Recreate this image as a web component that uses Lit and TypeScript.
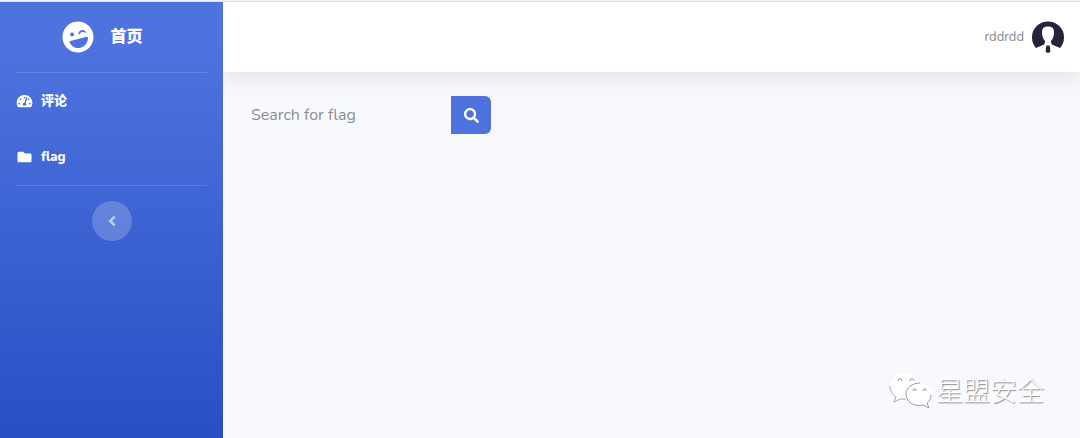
import { LitElement, html, css, svg } from "lit";
import { customElement, state } from "lit/decorators.js";

const icon = (viewBox: string, path: string, cls: string) => html`
  <svg class="icon ${cls}" viewBox=${viewBox} aria-hidden="true">${svg`<path d=${path}></path>`}</svg>
`;

const WINK =
  "M248 8C111 8 0 119 0 256s111 248 248 248 248-111 248-248S385 8 248 8zm20.1 198c4-25.2 34.2-42.1 59.9-42.1s55.9 16.9 59.9 42.1c1.7 11.1-11.4 18.3-19.8 10.8l-9.5-8.5c-14.8-13.2-46.2-13.2-61 0L288 217c-8.4 7.4-21.6.3-19.9-11zM168 160c17.7 0 32 14.3 32 32s-14.3 32-32 32-32-14.3-32-32 14.3-32 32-32zm230.9 146C391 369.4 319.2 432 256 432h-16c-73.4 0-134-55-142.9-126-1.2-9.5 6.3-18 15.9-18h270c9.6 0 17.1 8.4 15.9 18z";
const GAUGE =
  "M288 32C128.94 32 0 160.94 0 320c0 52.8 14.25 102.26 39.06 144.8 5.61 9.62 16.3 15.2 27.44 15.2h443c11.14 0 21.83-5.58 27.44-15.2C561.75 422.26 576 372.8 576 320c0-159.06-128.94-288-288-288zm0 64c14.71 0 26.58 10.13 30.32 23.65-1.11 2.26-2.64 4.23-3.45 6.67l-9.22 27.67c-5.13 3.49-10.97 6.01-17.64 6.01-17.67 0-32-14.33-32-32S270.33 96 288 96zM96 384c-17.67 0-32-14.33-32-32s14.33-32 32-32 32 14.33 32 32-14.33 32-32 32zm48-160c-17.67 0-32-14.33-32-32s14.33-32 32-32 32 14.33 32 32-14.33 32-32 32zm246.77-72.41l-61.33 184C343.13 347.33 352 364.54 352 384c0 11.72-3.38 22.55-8.88 32H232.88c-5.5-9.45-8.88-20.28-8.88-32 0-33.94 26.5-61.43 59.9-63.59l61.34-184.01c4.17-12.56 17.73-19.45 30.36-15.17 12.57 4.19 19.35 17.79 15.17 30.36zm14.66 57.2l15.52-46.55c3.47-1.29 7.13-2.23 11.05-2.23 17.67 0 32 14.33 32 32s-14.33 32-32 32c-11.38-.01-20.89-6.28-26.57-15.22zM480 384c-17.67 0-32-14.33-32-32s14.33-32 32-32 32 14.33 32 32-14.33 32-32 32z";
const FOLDER =
  "M464 128H272l-64-64H48C21.49 64 0 85.49 0 112v288c0 26.51 21.49 48 48 48h416c26.51 0 48-21.49 48-48V176c0-26.51-21.49-48-48-48z";
const SEARCH =
  "M505 442.7L405.3 343c-4.5-4.5-10.6-7-17-7H372c27.6-35.3 44-79.7 44-128C416 93.1 322.9 0 208 0S0 93.1 0 208s93.1 208 208 208c48.3 0 92.7-16.4 128-44v16.3c0 6.4 2.5 12.5 7 17l99.7 99.7c9.4 9.4 24.6 9.4 33.9 0l28.3-28.3c9.4-9.4 9.4-24.6.1-34zM208 336c-70.7 0-128-57.2-128-128 0-70.7 57.2-128 128-128 70.7 0 128 57.2 128 128 0 70.7-57.2 128-128 128z";
const ANGLE_LEFT =
  "M31.7 239l136-136c9.4-9.4 24.6-9.4 33.9 0l22.6 22.6c9.4 9.4 9.4 24.6 0 33.9L127.9 256l96.4 96.4c9.4 9.4 9.4 24.6 0 33.9L201.7 409c-9.4 9.4-24.6 9.4-33.9 0l-136-136c-9.5-9.4-9.5-24.6-.1-34z";

@customElement("app-root")
export class AppRoot extends LitElement {
  @state() private query = "";

  static styles = css`
    :host {
      display: flex;
      box-sizing: border-box;
      min-height: 100vh;
      padding-top: 2px;
      position: relative;
      background: linear-gradient(#f6f5f6 0 1px, #e2e1e3 1px 2px, #f8f9fd 2px);
      font-family: Nunito, Lato, "Noto Sans CJK SC", sans-serif;
      font-size: 16px;
      line-height: 24px;
      color: #858796;
    }
    *, *::before, *::after { box-sizing: border-box; }
    button, input { font: inherit; border: 0; margin: 0; }
    a { text-decoration: none; color: inherit; }
    .icon { display: block; fill: currentColor; flex: none; }

    .sidebar {
      flex: none;
      width: 223px;
      display: flex;
      flex-direction: column;
      color: #fff;
      font-weight: 800;
      background: linear-gradient(180deg, #4e73df 10%, #2850c4 100%);
    }
    .brand {
      height: 70px;
      display: flex;
      align-items: center;
      justify-content: center;
      gap: 16px;
      padding-right: 18px;
    }
    .wink { width: 32px; height: 32px; transform: rotate(-15deg); }
    .divider {
      width: auto;
      height: 1px;
      margin: 0 16px;
      border: 0;
      background: rgba(255, 255, 255, 0.15);
    }
    .menu { list-style: none; margin: 0; padding: 0; }
    .link {
      height: 56px;
      padding: 0 16px;
      display: flex;
      align-items: center;
      gap: 8px;
      font-size: 13px;
    }
    .item { width: 17px; height: 14px; }
    .toggle {
      align-self: center;
      width: 40px;
      height: 40px;
      margin-top: 15px;
      padding: 0;
      border-radius: 50%;
      display: grid;
      place-items: center;
      background: rgba(255, 255, 255, 0.2);
      color: rgba(255, 255, 255, 0.6);
      cursor: pointer;
    }
    .angle { width: 8px; height: 16px; }

    .content { flex: 1; min-width: 0; }
    .topbar {
      height: 70px;
      padding: 0 16px;
      display: flex;
      align-items: center;
      justify-content: flex-end;
      background: #fff;
      box-shadow: 0 2px 28px rgba(58, 59, 69, 0.15);
      clip-path: inset(0 0 -60px 0);
    }
    .user {
      display: flex;
      align-items: center;
      gap: 8px;
      font-size: 13px;
    }
    .avatar { width: 32px; height: 32px; display: block; }
    .search {
      display: flex;
      width: 252px;
      margin: 24px 16px;
    }
    .field {
      flex: 1;
      min-width: 0;
      height: 38px;
      padding: 0 12px;
      background: transparent;
      color: #6e707e;
      outline-offset: -2px;
    }
    .field::placeholder { color: #8c8d94; opacity: 1; }
    .go {
      width: 40px;
      height: 38px;
      padding: 0;
      display: grid;
      place-items: center;
      border-radius: 0 6px 6px 0;
      background: #4e73df;
      color: #fff;
      cursor: pointer;
    }
    .lens { width: 15px; height: 15px; }

    .watermark {
      position: absolute;
      right: 36px;
      bottom: 28px;
      display: flex;
      align-items: center;
      gap: 4px;
      font: 300 27px/40px "Noto Sans CJK SC", sans-serif;
      color: #fff;
      text-shadow: 1px 1px 1px #8a8a8e;
      pointer-events: none;
    }
    .chat { width: 44px; height: 38px; display: block; }
  `;

  render() {
    return html`
      <nav class="sidebar" aria-label="Main">
        <a class="brand" href="#">${icon("0 0 496 512", WINK, "wink")}<span>首页</span></a>
        <hr class="divider" />
        <ul class="menu">
          <li><a class="link" href="#comments">${icon("0 0 576 512", GAUGE, "item")}<span>评论</span></a></li>
          <li><a class="link" href="#flag">${icon("0 0 512 512", FOLDER, "item")}<span>flag</span></a></li>
        </ul>
        <hr class="divider" />
        <button class="toggle" type="button" aria-label="Toggle sidebar">
          ${icon("0 0 256 512", ANGLE_LEFT, "angle")}
        </button>
      </nav>
      <div class="content">
        <header class="topbar">
          <a class="user" href="#profile">
            <span>rddrdd</span>
            <svg class="avatar" viewBox="0 0 32 32" aria-hidden="true">
              <path fill="#25243a" d="M4 27A16 16 0 1 1 28 27L20 23.500C19 22 19 21 19 20C21 18 22 15 22 11.500C22 7 20 5.500 16 5.500S10 7 10 11.500C10 15 11 18 13 20C13 21 13 22 12 23.500Z"></path>
              <path fill="#25243a" d="M14.500 24.500h3l.5 2 .3 4.500-2.300 1-2.300-1 .3-4.500z"></path>
            </svg>
          </a>
        </header>
        <main>
          <form class="search" role="search" @submit=${(e: Event) => e.preventDefault()}>
            <input
              class="field"
              type="text"
              aria-label="Search for flag"
              placeholder="Search for flag"
              .value=${this.query}
              @input=${(e: Event) => (this.query = (e.target as HTMLInputElement).value)}
            />
            <button class="go" type="submit" aria-label="Search">${icon("0 0 512 512", SEARCH, "lens")}</button>
          </form>
        </main>
      </div>
      <div class="watermark">
        <svg class="chat" viewBox="0 0 44 38" aria-hidden="true">
          <path fill="#fff" d="M17 2C8 2 2 8 2 15c0 5 2 8 6 11l-2 5 6-3c9 2 21-2 21-13C33 8 26 2 17 2z"></path>
          <path fill="none" stroke="#a9aaae" d="M2 15c0 5 2 8 6 11l-2 5 6-3 6 0"></path>
          <path fill="#fff" d="M31 12c-8 0-13 5-13 11 0 8 8 13 17 11l6 3-2-5c3-2 5-5 5-9 0-6-6-11-13-11z"></path>
          <path fill="none" stroke="#9b9ca0" d="M32 12c-8 0-14 5-14 11 0 8 8 13 17 11l6 3-2-5c3-2 4-5 4-8"></path>
          <path fill="none" stroke="#8a8b90" d="M10 10c0-3 4-3 4 0M22 10c0-3 4-3 4 0M25 20c0-3 3-3 3 0M35 20c0-3 3-3 3 0"></path>
        </svg>
        <span>星盟安全</span>
      </div>
    `;
  }
}
